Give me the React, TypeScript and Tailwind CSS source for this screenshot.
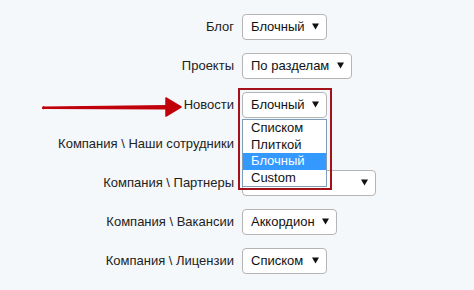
import React from 'react';

type Row = { label: string; value: string; width: number };

const ROWS: Row[] = [
  { label: 'Блог', value: 'Блочный', width: 85 },
  { label: 'Проекты', value: 'По разделам', width: 110 },
  { label: 'Новости', value: 'Блочный', width: 85 },
  // значение этого селекта закрыто раскрытым списком
  { label: 'Компания \\ Наши сотрудники', value: '', width: 85 },
  { label: 'Компания \\ Партнеры', value: '', width: 134 },
  { label: 'Компания \\ Вакансии', value: 'Аккордион', width: 95 },
  { label: 'Компания \\ Лицензии', value: 'Списком', width: 85 },
];

const OPTIONS = ['Списком', 'Плиткой', 'Блочный', 'Custom'];

function Caret() {
  return (
    <svg width="7" height="7" viewBox="0 0 7 7" className="absolute right-[7px] top-[8px]">
      <path d="M0 0.5 H7 L3.5 6.5 Z" fill="#111" />
    </svg>
  );
}

function FakeSelect({ value, width }: { value: string; width: number }) {
  return (
    <div
      className="relative h-[26px] shrink-0 rounded-[4px] border border-[#b5b5b5] bg-white pl-[8px] text-[13px] leading-[24px] text-[#111]"
      style={{ width }}
    >
      {value}
      <Caret />
    </div>
  );
}

export default function App() {
  return (
    <div
      className="relative h-[290px] w-[474px] overflow-hidden bg-[#f5f8fa] pt-[14px]"
      style={{ fontFamily: '"Liberation Sans", Arial, sans-serif' }}
    >
      <div className="flex flex-col gap-[13px]">
        {ROWS.map((row) => (
          <div key={row.label} className="flex items-center gap-[8px]">
            <div className="w-[234px] shrink-0 text-right text-[13px] text-[#222]">{row.label}</div>
            <FakeSelect value={row.value} width={row.width} />
          </div>
        ))}
      </div>

      {/* открытый список у «Новости» */}
      <div className="absolute left-[242px] top-[119px] w-[85px] border border-[#7f9db9] bg-white text-[13px] text-[#111]">
        {OPTIONS.map((opt) => (
          <div
            key={opt}
            className={
              opt === 'Блочный'
                ? 'h-[16.5px] bg-[#3399ff] pl-[8px] leading-[16.5px] text-white'
                : 'h-[16.5px] pl-[8px] leading-[16.5px]'
            }
          >
            {opt}
          </div>
        ))}
      </div>

      {/* рамка-выделение */}
      <div className="pointer-events-none absolute left-[238px] top-[88px] h-[102px] w-[94px] border-2 border-[#a3111b]" />

      {/* стрелка */}
      <svg className="absolute left-[40px] top-[96px]" width="145" height="22" viewBox="0 0 145 22">
        <path d="M3 10.5 L128 9 L128 13.5 L3 13 Z" fill="#c0000a" />
        <circle cx="3.5" cy="11.75" r="1.6" fill="#c0000a" />
        <path d="M126 2 L141 11 L126 20 Z" fill="#c0000a" strokeLinejoin="round" stroke="#c0000a" strokeWidth="1.5" />
      </svg>
    </div>
  );
}
